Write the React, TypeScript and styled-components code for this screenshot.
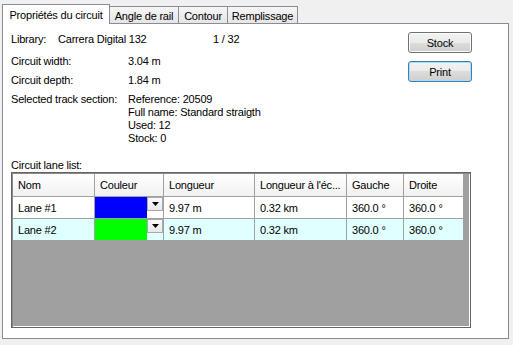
import React from "react"
import styled, { createGlobalStyle } from "styled-components"

const GlobalStyle = createGlobalStyle`
  html, body {
    margin: 0;
    padding: 0;
    background: #f0f0f0;
  }
  body {
    font-family: "Liberation Sans", Arial, sans-serif;
    font-size: 11px;
    letter-spacing: -0.2px;
    color: #000;
  }
`

const lanes = [
  { name: "Lane #1", color: "#0000ff", length: "9.97 m", scale: "0.32 km", left: "360.0 °", right: "360.0 °" },
  { name: "Lane #2", color: "#00ff00", length: "9.97 m", scale: "0.32 km", left: "360.0 °", right: "360.0 °" },
]

const columns = ["Nom", "Couleur", "Longueur", "Longueur à l'éc...", "Gauche", "Droite"]

const App = () => {
  return (
    <Window>
      <GlobalStyle />
      <TabStrip>
        <Tab $active $width={108}>Propriétés du circuit</Tab>
        <Tab $width={70}>Angle de rail</Tab>
        <Tab $width={50}>Contour</Tab>
        <Tab $width={71}>Remplissage</Tab>
      </TabStrip>
      <Panel>
        <TopSection>
          <Info>
            <LibraryRow>
              <LibLabel>Library:</LibLabel>
              <LibName>Carrera Digital 132</LibName>
              <span>1 / 32</span>
            </LibraryRow>
            <Field $gap={9}>
              <span>Circuit width:</span>
              <span>3.04 m</span>
            </Field>
            <Field $gap={6}>
              <span>Circuit depth:</span>
              <span>1.84 m</span>
            </Field>
            <Field $gap={6}>
              <span>Selected track section:</span>
              <ValueStack>
                <span>Reference: 20509</span>
                <span>Full name: Standard straigth</span>
                <span>Used: 12</span>
                <span>Stock: 0</span>
              </ValueStack>
            </Field>
          </Info>
          <ButtonColumn>
            <Button>Stock</Button>
            <Button $primary>Print</Button>
          </ButtonColumn>
        </TopSection>

        <ListLabel>Circuit lane list:</ListLabel>
        <LaneGrid>
          <Inner>
            <HeaderRow>
              {columns.map((c) => (
                <HeaderCell key={c}>{c}</HeaderCell>
              ))}
            </HeaderRow>
            {lanes.map((l, i) => (
              <Row key={l.name} $alt={i % 2 === 1}>
                <Cell>{l.name}</Cell>
                <ColorCell>
                  <Swatch $color={l.color} />
                  <DropButton>
                    <svg width="7" height="4" viewBox="0 0 7 4">
                      <path d="M0 0h7L3.5 4z" fill="#000" />
                    </svg>
                  </DropButton>
                </ColorCell>
                <Cell>{l.length}</Cell>
                <Cell>{l.scale}</Cell>
                <Cell>{l.left}</Cell>
                <Cell>{l.right}</Cell>
              </Row>
            ))}
          </Inner>
        </LaneGrid>
      </Panel>
    </Window>
  )
}

const Window = styled.div`
  width: 513px;
  height: 345px;
  overflow: hidden;
`

const TabStrip = styled.div`
  display: flex;
  align-items: flex-end;
  height: 23px;
  padding-left: 2px;
  position: relative;
  z-index: 1;
`

const Tab = styled.div<{ $active?: boolean; $width: number }>`
  box-sizing: border-box;
  width: ${({ $width }) => $width}px;
  height: ${({ $active }) => ($active ? 20 : 17)}px;
  margin-bottom: ${({ $active }) => ($active ? -1 : 0)}px;
  margin-left: -1px;
  &:first-child {
    margin-left: 0;
  }
  border: 1px solid #898c95;
  border-bottom: none;
  background: ${({ $active }) =>
    $active ? "#ffffff" : "linear-gradient(#f6f6f6, #e5e5e5)"};
  display: flex;
  align-items: center;
  justify-content: center;
  padding-top: ${({ $active }) => ($active ? 0 : 1)}px;
  white-space: nowrap;
`

const Panel = styled.div`
  box-sizing: border-box;
  width: 507px;
  margin-left: 2px;
  background: #ffffff;
  border: 1px solid #898c95;
  padding: 9px 37px 10px 8px;
`

const TopSection = styled.div`
  display: flex;
  justify-content: space-between;
  align-items: flex-start;
`

const Info = styled.div`
  display: flex;
  flex-direction: column;
  line-height: 13px;
`

const LibraryRow = styled.div`
  display: flex;
`

const LibLabel = styled.span`
  width: 47px;
`

const LibName = styled.span`
  width: 155px;
`

const Field = styled.div<{ $gap: number }>`
  display: grid;
  grid-template-columns: 117px auto;
  margin-top: ${({ $gap }) => $gap}px;
`

const ValueStack = styled.div`
  display: flex;
  flex-direction: column;
`

const ButtonColumn = styled.div`
  display: flex;
  flex-direction: column;
  gap: 8px;
  margin-top: -1px;
  margin-right: -1px;
`

const Button = styled.div<{ $primary?: boolean }>`
  box-sizing: border-box;
  width: 64px;
  height: 21px;
  border: 1px solid ${({ $primary }) => ($primary ? "#3c7fb1" : "#707070")};
  border-radius: 3px;
  background: linear-gradient(#f2f2f2 0%, #ebebeb 50%, #dddddd 50%, #cfcfcf 100%);
  box-shadow: ${({ $primary }) =>
    $primary ? "inset 0 0 0 1px #a9dcf6" : "inset 0 0 0 1px #fcfcfc"};
  display: flex;
  align-items: center;
  justify-content: center;
`

const ListLabel = styled.div`
  line-height: 13px;
  margin-top: 14px;
`

const LaneGrid = styled.div`
  box-sizing: border-box;
  width: 460px;
  height: 156px;
  border: 1px solid #646464;
  background: #a0a0a0;
  padding: 1px;
  box-shadow: inset 1px 1px 0 #8a8a8a, inset -1px -1px 0 #ffffff;
`

const Inner = styled.div`
  display: flex;
  flex-direction: column;
  width: 451px;
`

const gridCols = "82px 69px 91px 92px 57px 60px"

const HeaderRow = styled.div`
  display: grid;
  grid-template-columns: ${gridCols};
  height: 23px;
  box-sizing: border-box;
  border-bottom: 1px solid #a0a0a0;
  background: linear-gradient(#ffffff, #f1f1f1);
`

const HeaderCell = styled.div`
  box-sizing: border-box;
  border-right: 1px solid #a0a0a0;
  padding-left: 5px;
  display: flex;
  align-items: center;
  white-space: nowrap;
  overflow: hidden;
`

const Row = styled.div<{ $alt: boolean }>`
  display: grid;
  grid-template-columns: ${gridCols};
  height: 22px;
  box-sizing: border-box;
  border-bottom: 1px solid #a0a0a0;
  background: ${({ $alt }) => ($alt ? "#e0ffff" : "#ffffff")};
`

const Cell = styled.div`
  box-sizing: border-box;
  border-right: 1px solid #a0a0a0;
  padding-left: 5px;
  display: flex;
  align-items: center;
  white-space: nowrap;
  overflow: hidden;
`

const ColorCell = styled.div`
  box-sizing: border-box;
  border-right: 1px solid #a0a0a0;
  display: flex;
  align-items: flex-start;
`

const Swatch = styled.div<{ $color: string }>`
  flex: 1;
  align-self: stretch;
  background: ${({ $color }) => $color};
`

const DropButton = styled.div`
  box-sizing: border-box;
  width: 16px;
  height: 14px;
  border: 1px solid #a8a8a8;
  background: linear-gradient(#fbfbfb, #e8e8e8);
  display: flex;
  align-items: center;
  justify-content: center;
`

export default App
